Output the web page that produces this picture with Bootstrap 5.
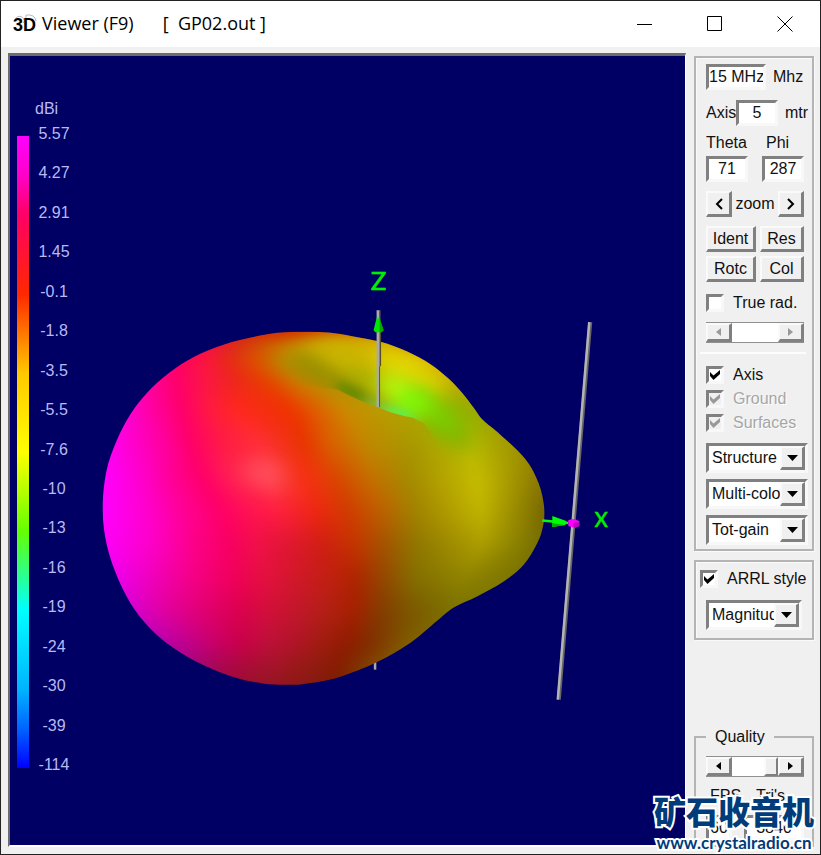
<!DOCTYPE html>
<html lang="en">
<head>
<meta charset="utf-8">
<meta name="viewport" content="width=device-width, initial-scale=1">
<title>3D Viewer (F9) [ GP02.out ]</title>
<link rel="stylesheet" href="https://cdn.jsdelivr.net/npm/bootstrap@5.3.0/dist/css/bootstrap.min.css">
<style>
  body { font: 16px/20px "Liberation Sans", Arial, sans-serif; color: #111; background: #f0f0f0; }
  .app-window { border: 1px solid #222; background: #f0f0f0; }
  .title-bar { height: 46px; font: 18px/24px "Open Sans", "Noto Sans", sans-serif; color: #000; padding-left: 12px; }
  .title-name { margin-left: 4px; margin-right: 29px; }
  .title-text { padding-bottom: 3px; }
  .caption-btn { width: 70px; background: none; border: 0; padding: 0 0 4px; }
  .workspace { padding: 6px 6px 7px 7px; gap: 8px; }
  .view3d { background: #000064; border: 3px solid; border-color: #6c6c6c #fff #fff #6c6c6c; border-left-width: 2px; border-right-width: 1px; border-bottom-width: 2px; min-width: 0; }
  .legend3d { color: #b9b9f4; width: 76px; padding: 43px 0 70px 7px; }
  .legend3d .unit { padding-left: 18px; }
  .legend3d ol { width: 34px; margin: 5px 0 0; }
  .legend3d li { text-align: center; }
  .plot { min-width: 0; height: 100%; }
  .side { width: 120px; margin-top: 3px; }
  .groupbox { border: 2px solid #b4b4b4; box-shadow: inset 1px 1px #fafafa, 1px 1px #fafafa; }
  .sunk { background: #fff; color: #111; border: 3px solid; border-color: #808080 #f8f8f8 #f8f8f8 #808080; border-radius: 0; padding: 0; height: 26px; text-align: center; min-width: 0; line-height: 20px; }
  .raised { background: #f0f0f0; color: #111; border: 2px solid; border-color: #fafafa #808080 #808080 #fafafa; border-right-width: 3px; border-bottom-width: 3px; padding: 0; line-height: 20px; }
  .tool { height: 26px; }
  .w26 { width: 26px; } .w42 { width: 42px; } .w44 { width: 44px; } .w50 { width: 50px; } .w60 { width: 60px; }
  .top-group { padding: 6px 4px 4px 10px; }
  .w98 { width: 98px; }
  .after { padding-left: 7px; }
  .gap-a { margin-top: 3px; } .gap-b { margin-top: 7px; } .gap-c { margin-top: 9px; } .gap-d { margin-top: 10px; }
  .tick { appearance: none; width: 18px; height: 18px; flex: none; margin: 0; background: #fff center/12px 12px no-repeat; border: 3px solid; border-color: #808080 #f8f8f8 #f8f8f8 #808080; }
  .tick:checked { background-image: url("data:image/svg+xml,%3Csvg xmlns='http://www.w3.org/2000/svg' viewBox='0 0 12 12'%3E%3Cpath d='M1 3v4l3.500 4L11 5V1L4.500 6.500z' fill='%23000'/%3E%3C/svg%3E"); }
  .tick:disabled { background-color: #f0f0f0; }
  .tick:disabled:checked { background-image: url("data:image/svg+xml,%3Csvg xmlns='http://www.w3.org/2000/svg' viewBox='0 0 12 12'%3E%3Cpath d='M1 3v4l3.500 4L11 5V1L4.500 6.500z' fill='%23999'/%3E%3C/svg%3E"); }
  .tick:disabled + label { color: #a6a6a6; text-shadow: 1px 1px #fff; }
  .opt { height: 24px; gap: 9px; }
  .rule { border-top: 2px solid #fcfcfc; margin: 9px 2px 9px -6px; }
  .combo { height: 30px; background: #fff; border: 3px solid; border-color: #808080 #f8f8f8 #f8f8f8 #808080; margin-bottom: 6px; }
  .combo select { appearance: none; border: 0; background: none; min-width: 0; padding: 0 0 0 3px; color: #111; outline: 0; text-overflow: clip; }
  .combo .drop { width: 25px; flex: none; pointer-events: none; }
  .scroller { height: 21px; border-top: 1px solid #909090; border-bottom: 1px solid #909090; }
  .scroller button { width: 26px; flex: none; }
  .scroller input { appearance: none; background: #fff; min-width: 0; margin: 0; height: 100%; }
  .scroller input::-webkit-slider-thumb { appearance: none; width: 14px; height: 19px; background: #f0f0f0; border: 2px solid; border-color: #fafafa #808080 #808080 #fafafa; border-radius: 0; }
  .scroller input:disabled::-webkit-slider-thumb { width: 0; border: 0; }
  .arrl { margin-top: 9px; padding: 5px 4px 8px 4px; }
  .arrl .combo { width: 96px; margin: 9px 0 0 6px; }
  .quality { padding: 0 8px 6px 10px; height: 120px; box-shadow: none; }
  .quality legend { float: none; width: auto; font-size: 16px; line-height: 20px; margin: 0 0 9px; padding: 0 9px; }
  .stamp { right: 6px; bottom: 0; color: #003c7a; text-align: center; paint-order: stroke fill; -webkit-text-stroke: 4px #fff; }
  .stamp strong { display: block; font: 900 32px/36px "Noto Sans CJK SC", sans-serif; padding-bottom: 4px; }
  .stamp a { display: block; color: inherit; text-decoration: none; font: 700 17px/22px Lato, sans-serif; }
</style>
</head>
<body>
<main class="app-window d-flex flex-column min-vh-100 position-relative">
  <header class="title-bar d-flex align-items-center bg-white">
    <svg width="25" height="22" viewBox="0 0 25 22" aria-hidden="true">
      <g fill="none" stroke="#bbb"><path d="M2 6q4-5 8-1q3 3 0 5M13 12V2q9-1 10 6"/></g>
      <text x="0" y="18" font-family="Liberation Sans" font-weight="700" font-size="18">3D</text>
    </svg>
    <span class="title-name title-text">Viewer (F9)</span><span class="title-text">[&nbsp; GP02.out ]</span>
    <div class="ms-auto d-flex align-self-stretch">
      <button class="caption-btn" aria-label="Minimize"><svg width="16" height="16"><path d="M0 8.500h15" stroke="#000"/></svg></button>
      <button class="caption-btn" aria-label="Maximize"><svg width="16" height="16"><path d="M.5.5h14v14H.5z" stroke="#000" fill="none"/></svg></button>
      <button class="caption-btn" aria-label="Close"><svg width="16" height="16"><path d="M.5.5l15 15m0-15l-15 15" stroke="#000"/></svg></button>
    </div>
  </header>

  <div class="workspace d-flex flex-fill">
    <section class="view3d d-flex flex-fill" aria-label="Radiation pattern">
      <div class="legend3d d-flex flex-column">
        <div class="unit">dBi</div>
        <div class="d-flex flex-fill gap-2">
          <svg class="flex-shrink-0" width="12" height="100%" viewBox="0 0 12 656" preserveAspectRatio="none">
            <defs><linearGradient id="rampFill" x1="0" x2="0" y1="0" y2="1">
              <stop offset="0" stop-color="#f0f"/><stop offset=".0625" stop-color="#ff00c8"/><stop offset=".125" stop-color="#ff0064"/>
              <stop offset=".1875" stop-color="#ff1432"/><stop offset=".25" stop-color="#ff2800"/><stop offset=".3125" stop-color="#ff7800"/>
              <stop offset=".375" stop-color="#ffc800"/><stop offset=".5" stop-color="#ff0"/><stop offset=".5625" stop-color="#b4ff00"/>
              <stop offset=".625" stop-color="#64ff00"/><stop offset=".6875" stop-color="#32ff80"/><stop offset=".75" stop-color="#0ff"/>
              <stop offset=".875" stop-color="#00b4ff"/><stop offset=".9375" stop-color="#0064ff"/><stop offset="1" stop-color="#00f"/>
            </linearGradient></defs>
            <rect y="17" width="12" height="632" fill="url(#rampFill)"/>
          </svg>
          <ol class="list-unstyled d-flex flex-column justify-content-between">
            <li>5.57</li><li>4.27</li><li>2.91</li><li>1.45</li><li>-0.1</li><li>-1.8</li><li>-3.5</li><li>-5.5</li><li>-7.6</li><li>-10</li><li>-13</li><li>-16</li><li>-19</li><li>-24</li><li>-30</li><li>-39</li><li>-114</li>
          </ol>
        </div>
      </div>
      <div class="flex-fill plot">
      <svg class="d-block w-100 h-100" viewBox="85 56 600 789" role="img" aria-label="3D gain surface with wire antenna">
        <defs>
          <clipPath id="body"><path id="outline"/></clipPath>
          <clipPath id="above"><path d="M380 60L480 240L640 225L740 238Q810 275 862 291Q910 314 965 322L1000 340L1060 430L1200 520H1400V0H380Z"/></clipPath>
          <filter id="b0" filterUnits="userSpaceOnUse" x="-100" y="-60" width="1640" height="1340" color-interpolation-filters="sRGB"><feGaussianBlur stdDeviation="16"/></filter>
          <filter id="b1" x="-150%" y="-200%" width="400%" height="500%" color-interpolation-filters="sRGB"><feGaussianBlur stdDeviation="28"/></filter>
          <filter id="b2" x="-150%" y="-200%" width="400%" height="500%" color-interpolation-filters="sRGB"><feGaussianBlur stdDeviation="18"/></filter>
        </defs>
        <path d="M374.500 640V670" stroke="#aaa" stroke-width="2.500"/>
        <g transform="translate(90 310) scale(.33333)"><g clip-path="url(#body)">
          <g id="strips" filter="url(#b0)"></g>
          <ellipse cx="1080" cy="360" rx="75" ry="30" fill="#7cb400" transform="rotate(38 1080 360)" filter="url(#b1)"/>
          <ellipse cx="520" cy="490" rx="60" ry="28" fill="#ff5a6c" opacity=".7" transform="rotate(15 520 490)" filter="url(#b1)"/>
          <g clip-path="url(#above)">
            <ellipse cx="810" cy="150" rx="160" ry="44" fill="#ccb400" transform="rotate(12 810 150)" filter="url(#b1)"/>
            <ellipse cx="690" cy="190" rx="105" ry="22" fill="#908c00" transform="rotate(28 690 190)" filter="url(#b1)"/>
            <ellipse cx="960" cy="185" rx="130" ry="34" fill="#e6d800" transform="rotate(30 960 185)" filter="url(#b1)"/>
            <ellipse cx="825" cy="215" rx="80" ry="26" fill="#a8b000" transform="rotate(28 825 215)" filter="url(#b1)"/>
            <ellipse cx="925" cy="240" rx="75" ry="38" fill="#b8ff10" transform="rotate(30 925 240)" filter="url(#b1)"/>
            <ellipse cx="1030" cy="305" rx="90" ry="34" fill="#78d400" transform="rotate(38 1030 305)" filter="url(#b1)"/>
            <ellipse cx="965" cy="280" rx="60" ry="34" fill="#7cff08" filter="url(#b1)"/>
            <ellipse cx="785" cy="248" rx="58" ry="16" fill="#488400" transform="rotate(27 785 248)" filter="url(#b2)"/>
            <ellipse cx="850" cy="288" rx="34" ry="12" fill="#60c050" transform="rotate(25 850 288)" filter="url(#b2)"/>
            <ellipse cx="920" cy="318" rx="58" ry="18" fill="#44ff6c" transform="rotate(18 920 318)" filter="url(#b2)"/>
          </g>
        </g></g>
        <g fill="none">
          <path d="M379.500 328V366" stroke="#554b28" stroke-width="2"/>
          <path d="M377.500 310V407" stroke="#aaa" stroke-width="3"/><path d="M379.500 310V320M379 366V407" stroke="#555"/>
          <path d="M590 322L558.500 700" stroke="#666" stroke-width="4"/><path d="M589 322L557.500 700" stroke="#b4b4b4" stroke-width="2.500"/>
          <path d="M542 520.500L568 523" stroke="#0f0" stroke-width="2.500"/>
        </g>
        <path d="M376 318h3l4 12-2 2h-6l-2-2z" fill="#00e600"/><path d="M379 318l4 12-2 2h-2z" fill="#00a800"/>
        <path d="M552 516l14 5-1 4-13 2z" fill="#0f0"/><path d="M552 523l12 2-12 2z" fill="#00b000"/>
        <path d="M568 520l5-1 6 2v5l-5 2-6-2z" fill="#f0f"/><path d="M572 523l7-1v4l-5 2z" fill="#c000c0"/>
        <g fill="#00f000" font-family="Lato" text-anchor="middle">
          <text x="378" y="290" font-size="26" stroke="#00f000" stroke-width=".5">Z</text>
          <text x="601" y="527" font-size="28" stroke="#00f000" stroke-width=".3">x</text>
        </g>
      </svg>
      </div>
    </section>

    <aside class="side d-flex flex-column flex-shrink-0">
      <div class="groupbox top-group">
        <div class="d-flex align-items-center"><input class="sunk w60" aria-label="Frequency" value="15 MHz"><span class="after">Mhz</span></div>
        <div class="d-flex align-items-center gap-d"><label for="ax">Axis</label><input id="ax" class="sunk w42" value="5"><span class="after">mtr</span></div>
        <div class="d-flex gap-b"><label for="th" class="w60">Theta</label><label for="ph">Phi</label></div>
        <div class="d-flex w98 justify-content-between gap-a"><input id="th" class="sunk w42" value="71"><input id="ph" class="sunk w42" value="287"></div>
        <div class="d-flex w98 justify-content-between align-items-center gap-c"><button class="raised tool w26" aria-label="Zoom out"><svg width="10" height="12"><path d="M8 1L3 6l5 5" fill="none" stroke="#000" stroke-width="2"/></svg></button><span>zoom</span><button class="raised tool w26" aria-label="Zoom in"><svg width="10" height="12"><path d="M2 1l5 5-5 5" fill="none" stroke="#000" stroke-width="2"/></svg></button></div>
        <div class="d-flex w98 justify-content-between gap-c"><button class="raised tool w50">Ident</button><button class="raised tool w44">Res</button></div>
        <div class="d-flex w98 justify-content-between mt-1"><button class="raised tool w50">Rotc</button><button class="raised tool w44">Col</button></div>
        <div class="d-flex align-items-center opt gap-c"><input type="checkbox" class="tick" id="tr"><label for="tr" class="text-nowrap">True rad.</label></div>
        <div class="scroller w98 d-flex gap-b">
          <button class="raised d-flex align-items-center justify-content-center" disabled aria-label="Less"><svg width="5" height="8"><path d="M5 0v8L0 4z" fill="#999"/></svg></button>
          <input type="range" class="flex-fill" disabled aria-label="Radius">
          <button class="raised d-flex align-items-center justify-content-center" disabled aria-label="More"><svg width="5" height="8"><path d="M0 0v8l5-4z" fill="#999"/></svg></button>
        </div>
        <div class="rule"></div>
        <div class="d-flex align-items-center opt"><input type="checkbox" class="tick" id="c1" checked><label for="c1">Axis</label></div>
        <div class="d-flex align-items-center opt"><input type="checkbox" class="tick" id="c2" checked disabled><label for="c2">Ground</label></div>
        <div class="d-flex align-items-center opt mb-2"><input type="checkbox" class="tick" id="c3" checked disabled><label for="c3">Surfaces</label></div>
        <div class="combo d-flex"><select class="flex-fill" aria-label="Display"><option>Structure</option></select><span class="raised drop d-flex align-items-center justify-content-center"><svg width="11" height="6"><path d="M0 0h11L5.500 6z"/></svg></span></div>
        <div class="combo d-flex"><select class="flex-fill" aria-label="Colours"><option>Multi-color</option></select><span class="raised drop d-flex align-items-center justify-content-center"><svg width="11" height="6"><path d="M0 0h11L5.500 6z"/></svg></span></div>
        <div class="combo d-flex mb-0"><select class="flex-fill" aria-label="Gain"><option>Tot-gain</option></select><span class="raised drop d-flex align-items-center justify-content-center"><svg width="11" height="6"><path d="M0 0h11L5.500 6z"/></svg></span></div>
      </div>
      <div class="groupbox arrl">
        <div class="d-flex align-items-center opt"><input type="checkbox" class="tick" id="ar" checked><label for="ar" class="text-nowrap">ARRL style</label></div>
        <div class="combo d-flex"><select class="flex-fill" aria-label="Scale"><option>Magnitude</option></select><span class="raised drop d-flex align-items-center justify-content-center"><svg width="11" height="6"><path d="M0 0h11L5.500 6z"/></svg></span></div>
      </div>
      <fieldset class="groupbox quality mt-auto">
        <legend>Quality</legend>
        <div class="scroller w98 d-flex">
          <button class="raised d-flex align-items-center justify-content-center" aria-label="Lower"><svg width="5" height="8"><path d="M5 0v8L0 4z"/></svg></button>
          <input type="range" class="flex-fill" value="100" aria-label="Quality">
          <button class="raised d-flex align-items-center justify-content-center" aria-label="Higher"><svg width="5" height="8"><path d="M0 0v8l5-4z"/></svg></button>
        </div>
        <div class="d-flex gap-c w98"><label for="fps" class="w50 ps-1">FPS</label><label for="tri">Tri's</label></div>
        <div class="d-flex w98 justify-content-between gap-c"><input id="fps" class="sunk w26" value="60"><input id="tri" class="sunk w60" value="3840"></div>
      </fieldset>
    </aside>
  </div>
  <div class="stamp position-absolute"><strong lang="zh">矿石收音机</strong><a href="#">www.crystalradio.cn</a></div>
</main>
<script src="https://cdn.jsdelivr.net/npm/bootstrap@5.3.0/dist/js/bootstrap.bundle.min.js"></script>
<script>
  // Silhouette points, joined by a smooth closed curve.
  const rim = [[35,600],[46,485],[77,392],[120,310],[172,244],[235,188],[310,140],[400,103],[480,82],[560,68],[640,65],[715,67],[785,78],[870,95],[950,124],[1020,162],[1075,206],[1115,248],[1150,293],[1178,330],[1230,374],[1305,447],[1345,520],[1362,595],[1358,650],[1340,702],[1300,765],[1240,815],[1160,860],[1090,893],[1040,933],[960,999],[860,1057],[740,1104],[640,1123],[580,1125],[520,1122],[440,1106],[350,1072],[265,1026],[190,968],[130,898],[82,808],[48,708]];
  let d = "M" + rim[0];
  rim.forEach((p, i) => {
    const n = rim.length, a = rim[(i + n - 1) % n], q = rim[(i + 1) % n], r = rim[(i + 2) % n];
    d += `C${p[0] + (q[0] - a[0]) / 6} ${p[1] + (q[1] - a[1]) / 6} ${q[0] - (r[0] - p[0]) / 6} ${q[1] - (r[1] - p[1]) / 6} ${q}`;
  });
  document.getElementById("outline").setAttribute("d", d + "Z");

  // Gain contours of the front surface: per scan line, twelve "x colour" pairs.
  const rows = {
    60: "0 ff00ff 60 ff00c8 150 ff0098 270 f50060 380 e81038 450 e02010 600 d42c00 720 d04800 860 c87000 960 c08000 1100 b89000 1300 a08000",
    100: "0 ff00ff 60 ff00d0 170 ff0098 280 ff0068 370 f01440 450 d83010 540 cc5c00 640 c89000 740 d0a800 860 d4a800 940 c88c00 1300 907800",
    150: "0 ff00ff 100 ff00c8 200 ff0088 270 ff0060 340 fc1440 410 e82818 500 dc5000 580 b88800 680 a89800 760 c8b400 940 e0c800 1040 d8a800",
    200: "0 ff00ff 90 ff00d0 180 ff0098 260 ff0068 350 fa1840 440 ec2818 520 e44400 620 c88000 700 b09000 800 a89c00 1000 c0b000 1130 c8a800",
    300: "60 ff00e8 120 ff00c8 200 ff0098 280 ff0068 350 ff1844 440 ff2820 600 ee3400 680 dd6000 760 cc8800 870 b89c00 1130 94b000 1230 b09800",
    400: "45 ff00f4 150 ff00c0 230 ff0098 300 ff0068 400 ff1c44 510 ff3038 640 e83400 720 d86000 830 c08800 960 a89800 1140 b4b800 1310 9c8c00",
    500: "35 ff00ff 160 ff00c8 240 ff0098 340 ff0066 430 ff2450 540 ff4048 650 f43010 740 d84800 840 c47000 960 a48c00 1160 c4bc00 1350 8a7800",
    600: "35 ff00ff 170 ff00cc 270 ff0098 390 ff0066 480 ff1450 560 ff2040 680 ec2810 770 d03c00 870 bc6000 980 a08400 1170 c0b400 1362 786800",
    700: "40 fc00f8 190 fc00c4 300 fc008c 420 f80060 500 f01048 600 e01830 700 d02010 790 c43400 880 a45400 980 907800 1170 ac9e00 1340 787000",
    800: "70 ec00ec 190 f000b8 300 f40088 430 f00058 520 e41040 620 d01828 720 c02010 790 b02400 880 944800 980 847000 1120 908400 1270 7c7400",
    900: "120 d400d0 210 e000a4 320 e00078 440 dc0050 540 d01038 630 c01828 720 b02010 790 a42000 870 843c00 960 7c5800 1070 7c7000 1160 807800",
    1000: "210 b800a8 290 c0008c 370 c80068 450 c80048 530 bc1038 610 b01428 690 a01c10 770 901c00 840 803000 900 804800 960 806000 1030 806c00",
    1080: "330 a00870 380 a40850 430 a80840 490 a41030 550 a01428 610 981818 680 8c1c10 740 841c00 790 803000 840 804400 870 805000 900 806000",
    1170: "340 900860 390 940848 440 980838 500 941028 560 901420 620 881418 680 801810 740 781c00 790 782c00 840 784000 870 784c00 900 785800"
  };
  const ys = Object.keys(rows).map(Number);
  const table = ys.map(y => {
    const t = rows[y].split(" "), out = [];
    for (let i = 0; i < t.length; i += 2) {
      const c = parseInt(t[i + 1], 16);
      out.push([+t[i], c >> 16, c >> 8 & 255, c & 255]);
    }
    return out;
  });
  // Catmull-Rom keeps the shading smooth between scan lines.
  const cr = (a, b, c, d, t) => b + .5 * t * (c - a + t * (2 * a - 5 * b + 4 * c - d + t * (3 * (b - c) + d - a)));
  const clamp = v => Math.max(0, Math.min(255, Math.round(v)));
  let svg = "";
  for (let y = 0; y < 1170; y += 3) {
    const yy = Math.max(60, y);
    let k = 0;
    while (k < ys.length - 2 && ys[k + 1] <= yy) k++;
    const t = (yy - ys[k]) / (ys[k + 1] - ys[k]);
    const A = table[Math.max(0, k - 1)], B = table[k], C = table[k + 1], D = table[Math.min(ys.length - 1, k + 2)];
    let stops = "";
    B.forEach((b, i) => {
      const v = b.map((_, j) => cr(A[i][j], b[j], C[i][j], D[i][j], t));
      stops += `<stop offset="${v[0] / 1440}" stop-color="rgb(${clamp(v[1])},${clamp(v[2])},${clamp(v[3])})"/>`;
    });
    svg += `<linearGradient id="s${y}" gradientUnits="userSpaceOnUse" x1="0" x2="1440">${stops}</linearGradient><rect x="-60" y="${y}" width="1560" height="${y > 1160 ? 60 : 6}" fill="url(#s${y})"/>`;
  }
  document.getElementById("strips").innerHTML = svg;
</script>
</body>
</html>
